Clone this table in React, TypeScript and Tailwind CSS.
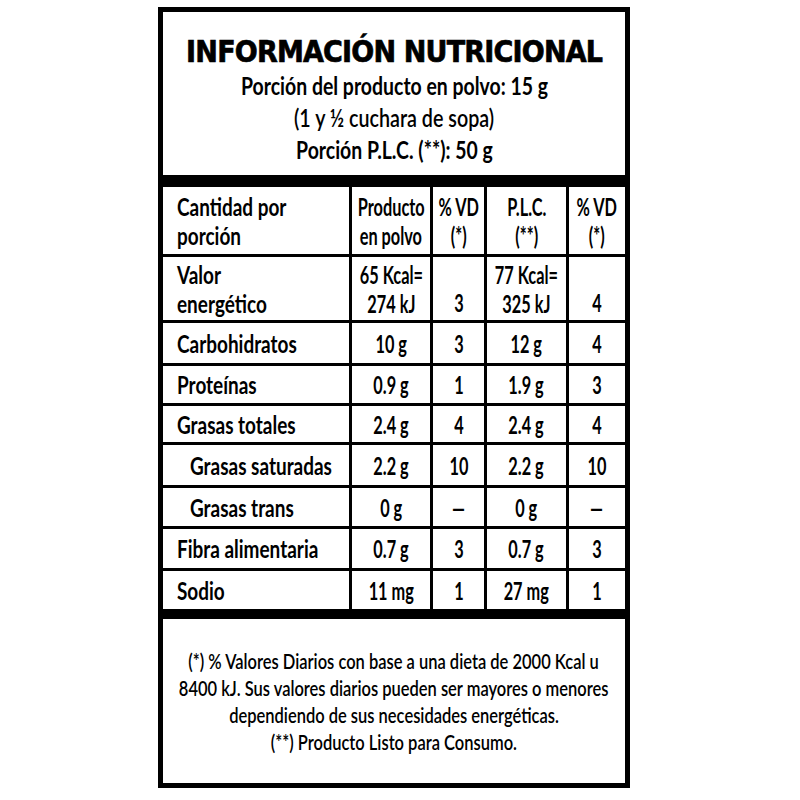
import React from 'react';

type Row = {
  label: string[];
  indent?: boolean;
  powder: string[];
  vdPowder: string;
  plc: string[];
  vdPlc: string;
};

const rows: Row[] = [
  { label: ['Valor', 'energético'], powder: ['65 Kcal=', '274 kJ'], vdPowder: '3', plc: ['77 Kcal=', '325 kJ'], vdPlc: '4' },
  { label: ['Carbohidratos'], powder: ['10 g'], vdPowder: '3', plc: ['12 g'], vdPlc: '4' },
  { label: ['Proteínas'], powder: ['0.9 g'], vdPowder: '1', plc: ['1.9 g'], vdPlc: '3' },
  { label: ['Grasas totales'], powder: ['2.4 g'], vdPowder: '4', plc: ['2.4 g'], vdPlc: '4' },
  { label: ['Grasas saturadas'], indent: true, powder: ['2.2 g'], vdPowder: '10', plc: ['2.2 g'], vdPlc: '10' },
  { label: ['Grasas trans'], indent: true, powder: ['0 g'], vdPowder: '—', plc: ['0 g'], vdPlc: '—' },
  { label: ['Fibra alimentaria'], powder: ['0.7 g'], vdPowder: '3', plc: ['0.7 g'], vdPlc: '3' },
  { label: ['Sodio'], powder: ['11 mg'], vdPowder: '1', plc: ['27 mg'], vdPlc: '1' },
];

// no condensed face is installed, so lines are squeezed horizontally
function Squeeze({
  children,
  left,
  scale = 'scale-x-[0.8]',
}: {
  children: React.ReactNode;
  left?: boolean;
  scale?: string;
}) {
  return (
    <span className={`inline-block whitespace-nowrap ${scale} ${left ? 'origin-left' : 'origin-center'}`}>
      {children}
    </span>
  );
}

// left = label column (wider squeeze), otherwise a centred value column
function Lines({ lines, left }: { lines: string[]; left?: boolean }) {
  return (
    <div className={`flex flex-col leading-[29px] ${left ? 'items-start' : 'items-center'}`}>
      {lines.map((l) => (
        <Squeeze key={l} left={left} scale={left ? 'scale-x-[0.79]' : 'scale-x-[0.68]'}>
          {l}
        </Squeeze>
      ))}
    </div>
  );
}

export default function App() {
  return (
    <div className="min-h-[800px] bg-white pt-[7px] font-['Lato',sans-serif] text-black">
      <div className="ml-[158px] flex w-[472px] flex-col border-[5px] border-black">
        {/* heading */}
        <div className="flex h-[163px] flex-col items-center pt-[25px]">
          <h1 className="whitespace-nowrap font-['DejaVu_Sans',sans-serif] text-[30px] font-bold leading-[30px] tracking-[-0.9px] scale-x-[0.9] [-webkit-text-stroke:0.7px_black]">
            INFORMACIÓN NUTRICIONAL
          </h1>
          <div className="mt-[3px] flex flex-col items-center text-[24px] leading-[32px]">
            <p className="font-bold">
              <Squeeze scale="scale-x-[0.81]">Porción del producto en polvo: 15 g</Squeeze>
            </p>
            <p className="font-semibold">
              <Squeeze scale="scale-x-[0.82]">(1 y ½ cuchara de sopa)</Squeeze>
            </p>
            <p className="font-bold">
              <Squeeze scale="scale-x-[0.81]">Porción P.L.C. (**): 50 g</Squeeze>
            </p>
          </div>
        </div>

        <div className="h-[12px] bg-black" />

        {/* table */}
        <div className="grid grid-cols-[186px_78px_51px_79px_56px] grid-rows-[67px_63px_40px_37px_36px_40px_38px_39px_38px] gap-[3px] bg-black text-[24px] font-bold">
          <div className="flex items-center bg-white pl-[14px]">
            <Lines left lines={['Cantidad por', 'porción']} />
          </div>
          <div className="flex items-center justify-center bg-white">
            <Lines lines={['Producto', 'en polvo']} />
          </div>
          <div className="flex items-center justify-center bg-white">
            <Lines lines={['% VD', '(*)']} />
          </div>
          <div className="flex items-center justify-center bg-white">
            <Lines lines={['P.L.C.', '(**)']} />
          </div>
          <div className="flex items-center justify-center bg-white">
            <Lines lines={['% VD', '(*)']} />
          </div>

          {rows.map((r) => {
            const tall = r.label.length > 1;
            const vdCell = tall
              ? 'flex items-end justify-center bg-white pb-[3px]'
              : 'flex items-center justify-center bg-white';
            return (
              <React.Fragment key={r.label.join(' ')}>
                <div className={`flex items-center bg-white ${r.indent ? 'pl-[27px]' : 'pl-[14px]'}`}>
                  <Lines left lines={r.label} />
                </div>
                <div className="flex items-center justify-center bg-white">
                  <Lines lines={r.powder} />
                </div>
                <div className={vdCell}>
                  <Lines lines={[r.vdPowder]} />
                </div>
                <div className="flex items-center justify-center bg-white">
                  <Lines lines={r.plc} />
                </div>
                <div className={vdCell}>
                  <Lines lines={[r.vdPlc]} />
                </div>
              </React.Fragment>
            );
          })}
        </div>

        <div className="h-[10px] bg-black" />

        {/* footnote */}
        <div className="flex h-[164px] flex-col items-center justify-center text-[21px] font-semibold leading-[27px]">
          <Squeeze scale="scale-x-[0.785]">(*) % Valores Diarios con base a una dieta de 2000 Kcal u</Squeeze>
          <Squeeze scale="scale-x-[0.785]">8400 kJ. Sus valores diarios pueden ser mayores o menores</Squeeze>
          <Squeeze scale="scale-x-[0.785]">dependiendo de sus necesidades energéticas.</Squeeze>
          <Squeeze scale="scale-x-[0.785]">(**) Producto Listo para Consumo.</Squeeze>
        </div>
      </div>
    </div>
  );
}
